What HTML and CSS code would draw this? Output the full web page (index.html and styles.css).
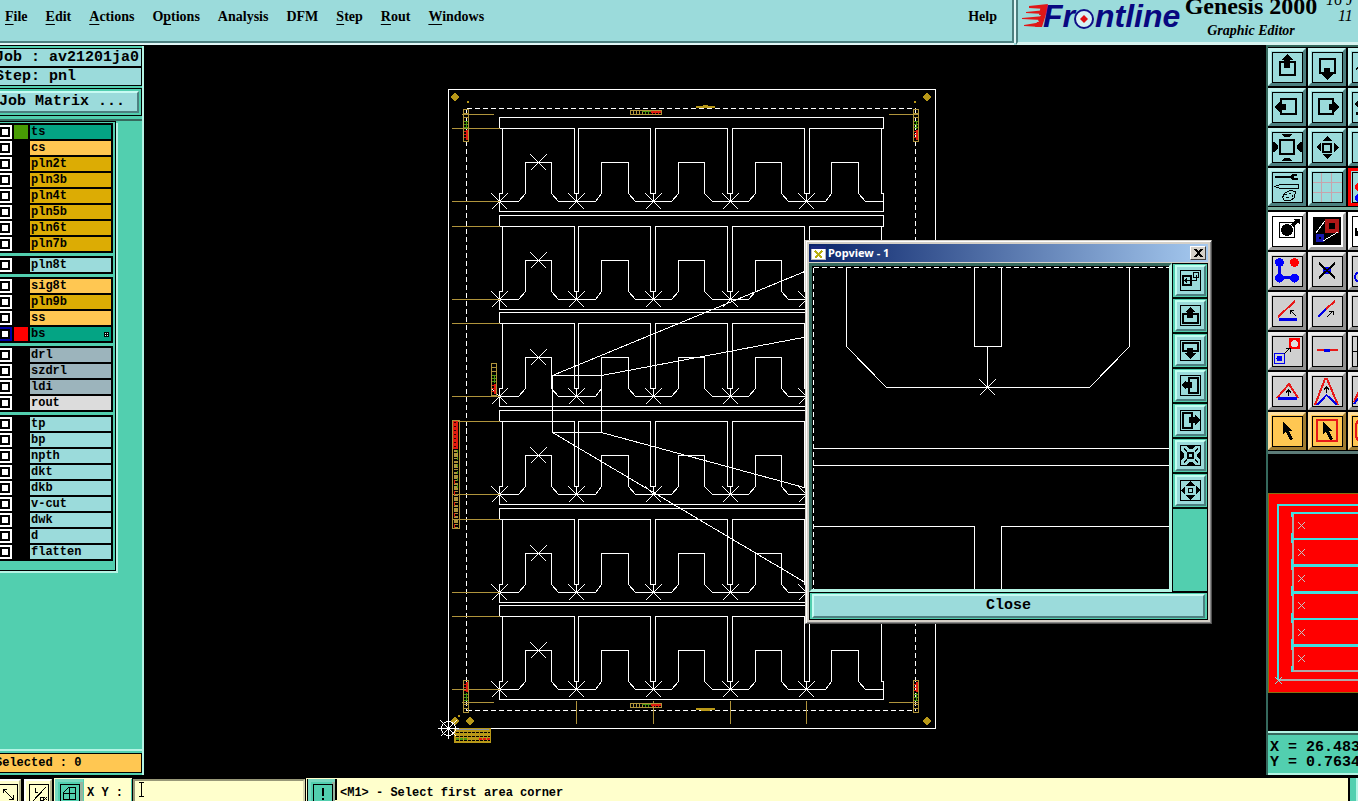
FILE: index.html
```html
<!DOCTYPE html>
<html lang="en">
<head>
<meta charset="utf-8">
<title>Genesis 2000 - Graphic Editor</title>
<link rel="stylesheet" href="styles.css">
</head>
<body>
<svg class="defs" aria-hidden="true">
  <defs>
    <g id="mark"><path d="M-8-8 8 8M-8 8 8-8"/></g>
    <g id="boardrow">
      <path d="M499.500 128.500V117.500H883.500V128.500"/>
      <path d="M499.500 128.500H574.500V193.500H578.500V128.500H650.500V193.500H655.500V128.500H727.500V193.500H732.500V128.500H804.500V193.500H809.500V128.500H883.500"/>
      <path d="M502.500 128.500V193.500H499.500V211.500H883.500V193.500H881.500V128.500"/>
      <path d="M576.500 193.500V201.500M653.500 193.500V201.500M730.500 193.500V201.500M806.500 193.500V201.500"/>
      <path d="M499.500 201.500H518.500L525.500 193.500V162.500H551.500V193.500L558.500 201.500H595.500L601.500 193.500V162.500H628.500V193.500L635.500 201.500H671.500L678.500 193.500V162.500H704.500V193.500L712.500 201.500H748.500L755.500 193.500V162.500H781.500V193.500L788.500 201.500H825.500L831.500 193.500V162.500H858.500V193.500L865.500 201.500H883.500"/>
      <use href="#mark" x="499.500" y="201.500"/><use href="#mark" x="576.500" y="201.500"/><use href="#mark" x="653.500" y="201.500"/><use href="#mark" x="730.500" y="201.500"/><use href="#mark" x="806.500" y="201.500"/><use href="#mark" x="538.500" y="162.500"/>
      <path class="gold" d="M452 128.500H500M452 201.500H500"/>
    </g>
    <g id="ladder">
      <rect x=".5" y=".5" width="5" height="32" class="gold"/>
      <path class="gold" d="M0 4.500H6M0 8.500H6"/>
      <path class="green" d="M1 12.500H5M1 15.500H5M1 18.500H5M3.500 12V20"/>
      <path class="red" d="M1 22.500H5M1 25.500H5M1 28.500H5M3.500 21V31M4.500 21V31"/>
    </g>
    <g id="hladder">
      <rect x=".5" y=".5" width="31" height="4" class="gold"/>
      <path class="gold" d="M3.500 0V5M6.500 0V5M9.500 0V5M12.500 0V5"/>
      <path class="green" d="M12 1.500H21M15.500 1V4M18.500 1V4"/>
      <path class="red" d="M21 2.500H31M21 1.500H31M22.500 1V4M25.500 1V4M28.500 1V4"/>
    </g>
    <path id="diamond" class="goldfill" d="M-1-4H1V-3H2V-2H3V-1H4V1H3V2H2V3H1V4H-1V3H-2V2H-3V1H-4V-1H-3V-2H-2V-3H-1Z"/>
    <g id="i-up"><path class="l2" d="M8 10H23V23H8Z"/><path class="f" d="M15 2 21 8H18V16H12V8H10Z"/></g>
    <g id="i-down"><path class="l2" d="M8 7H23V21H8Z"/><path class="f" d="M12 16H18V22H21L15 28 10 22H12Z"/></g>
    <g id="i-left"><path class="l2" d="M9 7H24V22H9Z"/><path class="f" d="M2 15 8 10V12H14V18H8V20Z"/></g>
    <g id="i-right"><path class="l2" d="M7 7H21V22H7Z"/><path class="f" d="M28 15 22 10V12H17V18H22V20Z"/></g>
    <g id="i-in"><path class="f" d="M10 2H20V3L17 5H13L10 3ZM10 29H20V28L17 26H13L10 28ZM1 10V20H2L6 17V13L2 10ZM30 10V20H29L25 17V13L29 10Z"/></g>
    <g id="i-out"><path class="f" d="M15 4 20 9H11ZM15 27 20 22H11ZM4 15 9 11V20ZM27 15 22 11V20Z"/></g>
    <path id="cursor" class="f" d="M11 6V18L14 16 18 24 21 23 17 15H21Z"/>
    <path id="tip" class="l1" d="M-3-3H1M-3-3V1M-3-3 3 3"/>
  </defs>
</svg>

<header class="top">
  <nav class="menubar">
    <button class="menu"><u>F</u>ile</button>
    <button class="menu"><u>E</u>dit</button>
    <button class="menu"><u>A</u>ctions</button>
    <button class="menu">O<u>p</u>tions</button>
    <button class="menu">Analysis</button>
    <button class="menu">DFM</button>
    <button class="menu"><u>S</u>tep</button>
    <button class="menu"><u>R</u>out</button>
    <button class="menu"><u>W</u>indows</button>
    <button class="menu help">Help</button>
  </nav>
  <div class="brand">
    <svg class="logo" width="164" height="40" viewBox="0 0 164 40" role="img" aria-label="Frontline">
      <path fill="#e01818" d="M7 6 26 4 24 9 7 8ZM4 12 24 10 22 14 4 13ZM0 18 22 16 20 20 0 19ZM2 25 20 22 19 27 2 26Z"/>
      <path fill="#e01818" d="M19 5H27L20 27H13L15 22H17L16 20 19 15H17Z"/>
      <text class="logotext" x="21" y="27">Fr</text>
      <circle cx="62" cy="19" r="9" fill="#d6f3f3" stroke="#101088" stroke-width="2"/>
      <path fill="#e01010" d="M62 15 66 19 62 23 58 19Z"/>
      <text class="logotext" x="73" y="27">ntline</text>
    </svg>
    <div class="product"><strong>Genesis 2000</strong><em>Graphic Editor</em></div>
    <div class="clock"><span>16 J</span><span>11</span></div>
  </div>
</header>

<main class="work">
  <aside class="side">
    <div class="info">Job : av21201ja0</div>
    <div class="info second">Step: pnl</div>
    <div class="matrixbox"><button class="matrix">Job Matrix ...</button></div>
    <div class="well">
      <div class="layers">
        <div class="group">
          <label class="layer"><input type="checkbox"><i class="swatch lime"></i><span class="jade">ts</span></label>
          <label class="layer"><input type="checkbox"><i class="swatch"></i><span class="amber">cs</span></label>
          <label class="layer"><input type="checkbox"><i class="swatch"></i><span class="ochre">pln2t</span></label>
          <label class="layer"><input type="checkbox"><i class="swatch"></i><span class="ochre">pln3b</span></label>
          <label class="layer"><input type="checkbox"><i class="swatch"></i><span class="ochre">pln4t</span></label>
          <label class="layer"><input type="checkbox"><i class="swatch"></i><span class="ochre">pln5b</span></label>
          <label class="layer"><input type="checkbox"><i class="swatch"></i><span class="ochre">pln6t</span></label>
          <label class="layer"><input type="checkbox"><i class="swatch"></i><span class="ochre">pln7b</span></label>
        </div>
        <div class="group">
          <label class="layer"><input type="checkbox"><i class="swatch"></i><span>pln8t</span></label>
        </div>
        <div class="group">
          <label class="layer"><input type="checkbox"><i class="swatch"></i><span class="amber">sig8t</span></label>
          <label class="layer"><input type="checkbox"><i class="swatch"></i><span class="ochre">pln9b</span></label>
          <label class="layer"><input type="checkbox"><i class="swatch"></i><span class="amber">ss</span></label>
          <label class="layer work-layer"><input type="checkbox"><i class="swatch scarlet"></i><span class="jade">bs<svg width="5" height="5" viewBox="0 0 5 5"><path d="M0 0H5V5H0Z"/><path fill="#dff" d="M1 1H2V2H1ZM3 1H4V2H3ZM1 3H2V4H1ZM3 3H4V4H3Z"/></svg></span></label>
        </div>
        <div class="group">
          <label class="layer"><input type="checkbox"><i class="swatch"></i><span class="slate">drl</span></label>
          <label class="layer"><input type="checkbox"><i class="swatch"></i><span class="slate">szdrl</span></label>
          <label class="layer"><input type="checkbox"><i class="swatch"></i><span class="slate">ldi</span></label>
          <label class="layer"><input type="checkbox"><i class="swatch"></i><span class="pale">rout</span></label>
        </div>
        <div class="group">
          <label class="layer"><input type="checkbox"><i class="swatch"></i><span>tp</span></label>
          <label class="layer"><input type="checkbox"><i class="swatch"></i><span>bp</span></label>
          <label class="layer"><input type="checkbox"><i class="swatch"></i><span>npth</span></label>
          <label class="layer"><input type="checkbox"><i class="swatch"></i><span>dkt</span></label>
          <label class="layer"><input type="checkbox"><i class="swatch"></i><span>dkb</span></label>
          <label class="layer"><input type="checkbox"><i class="swatch"></i><span>v-cut</span></label>
          <label class="layer"><input type="checkbox"><i class="swatch"></i><span>dwk</span></label>
          <label class="layer"><input type="checkbox"><i class="swatch"></i><span>d</span></label>
          <label class="layer"><input type="checkbox"><i class="swatch"></i><span>flatten</span></label>
        </div>
      </div>
    </div>
    <div class="selected">Selected : 0</div>
  </aside>

  <section class="canvas">
    <svg class="drawing" viewBox="144 45 1122 732" preserveAspectRatio="xMinYMin meet" role="img" aria-label="Panel layout">
      <path d="M448.500 89.500H935.500V728.500H448.500Z"/>
      <path class="dash" d="M466.500 108.500H915.500M466.500 108.500V710.500M915.500 108.500V710.500M466.500 710.500H915.500"/>
      <use href="#boardrow"/>
      <use href="#boardrow" y="98"/>
      <use href="#boardrow" y="195"/>
      <use href="#boardrow" y="293"/>
      <use href="#boardrow" y="391"/>
      <use href="#boardrow" y="488"/>
      <path class="gold" d="M462 114.500H494M889 114.500H919M462 702.500H494M889 702.500H919M576.500 701V724M653.500 701V724M730.500 701V724M806.500 701V724"/>
      <use href="#ladder" x="463" y="109"/>
      <use href="#ladder" x="913" y="109"/>
      <use href="#ladder" transform="translate(463 713) scale(1 -1)"/>
      <use href="#ladder" transform="translate(913 713) scale(1 -1)"/>
      <use href="#hladder" x="630" y="110"/>
      <use href="#hladder" x="630" y="703"/>
      <path class="goldfill" d="M696 106H703V105H708V106H715V108H696ZM696 708H715V710H710V711H701V710H696Z"/>
      <path class="goldfill" d="M467 101H469V103H467ZM914 101H916V103H914ZM458 715H460V717H458Z"/>
      <use href="#diamond" x="455" y="97"/><use href="#diamond" x="927" y="97"/><use href="#diamond" x="455" y="721"/><use href="#diamond" x="470" y="721"/><use href="#diamond" x="927" y="721"/>
      <use href="#ladder" x="491" y="363"/>
      <path class="red" stroke-width="5" d="M455.500 421V449"/>
      <path stroke="#300" stroke-dasharray="1 3" stroke-width="2" d="M455 422V449"/>
      <path class="gold" d="M452.500 449V528.500H459.500V420.500H452.500V449"/>
      <path class="gold" stroke-width="4" stroke-dasharray="2 1 4 1 1 2" d="M456 450V528"/>
      <path class="green" stroke-dasharray="3 4" d="M457.500 450V490"/>
      <path class="red" stroke-dasharray="4 7" d="M454.500 480V528"/>
      <path class="goldfill" d="M454 728H491V743H454Z"/>
      <path class="slateline" d="M457 729.500H489"/>
      <path stroke="#000" stroke-dasharray="3 1" d="M456 732.500H490M456 736.500H490M456 740.500H490"/>
      <path class="green" stroke-width="2" stroke-dasharray="3 1" d="M456 739H467"/>
      <path class="red" stroke-width="2" stroke-dasharray="3 1" d="M479 739H490"/>
      <circle cx="448.500" cy="728.500" r="7"/>
      <path d="M438 728.500H459M448.500 718V739M440.500 720.500 456.500 736.500M440.500 736.500 456.500 720.500"/>
      <path d="M552.500 375.500H601.500V432.500H552.500Z"/>
      <path d="M552.500 375.500 806 271M601.500 375.500 806 337M601.500 432.500 806 488M552.500 432.500 806 583"/>
    </svg>

    <section class="popview" aria-label="Popview - 1">
      <div class="titlebar">
        <svg width="15" height="14" viewBox="0 0 15 14"><path fill="#fff" d="M0 1H15V14H0Z"/><path fill="#1a2a80" d="M0 0H15V3H0Z"/><path fill="#b8b8b8" d="M0 3H1V14H0ZM14 3H15V14H14ZM0 13H15V14H0Z"/><path stroke="#b8b010" stroke-width="2" d="M4 5 11 12M11 5 4 12"/></svg>
        <span>Popview - 1</span>
        <button class="close" aria-label="Close window"><svg width="9" height="8" viewBox="0 0 9 8"><path stroke="#000" stroke-width="2" d="M1 0 8 8M8 0 1 8"/></svg></button>
      </div>
      <div class="popbody">
        <svg class="popdrawing" viewBox="812 266 357 323" preserveAspectRatio="xMinYMin slice" role="img" aria-label="Magnified detail">
          <path class="dash" d="M813.500 267.500H1169M813.500 267.500V589"/>
          <path d="M846.500 267V346.500L886.500 387.500H1089.500L1129.500 346.500V267M974.500 267V346.500H1001.500V267M987.500 346.500V387.500"/>
          <use href="#mark" x="987.500" y="387.500"/>
          <path d="M813 448.500H1169M813 465.500H1169M813 526.500H974.500V589M1169 526.500H1001.500V589"/>
        </svg>
        <div class="poptools">
          <button aria-label="Link"><svg viewBox="2 2 27 27"><path class="frame" d="M5.500 5.500H25.500V25.500H5.500Z"/><path class="l2" d="M8 11H16V20H8Z"/><path class="l1" d="M18.500 7.500H23.500V12.500H18.500ZM21.500 10V15.500H10M12 13.500 10 15.500 12 17.500"/></svg></button>
          <button aria-label="Pan up"><svg viewBox="2 2 27 27"><path class="frame" d="M5.500 5.500H25.500V25.500H5.500Z"/><path class="l2" d="M8 14H23V23H8Z"/><path class="f" d="M15 7 21 12H18V18H12V12H10Z"/></svg></button>
          <button aria-label="Pan down"><svg viewBox="2 2 27 27"><path class="frame" d="M5.500 5.500H25.500V25.500H5.500Z"/><path class="l2" d="M8 8H23V16H8Z"/><path class="f" d="M12 13H18V18H21L15 24 10 18H12Z"/></svg></button>
          <button aria-label="Pan left"><svg viewBox="2 2 27 27"><path class="frame" d="M5.500 5.500H25.500V25.500H5.500Z"/><path class="l2" d="M14 8H23V23H14Z"/><path class="f" d="M6 15 11 10V12H17V18H11V20Z"/></svg></button>
          <button aria-label="Pan right"><svg viewBox="2 2 27 27"><path class="frame" d="M5.500 5.500H25.500V25.500H5.500Z"/><path class="l2" d="M8 8H17V23H8Z"/><path class="f" d="M25 15 20 10V12H14V18H20V20Z"/></svg></button>
          <button aria-label="Zoom out"><svg viewBox="2 2 27 27"><path class="frame" d="M5.500 5.500H25.500V25.500H5.500Z"/><path class="l2" d="M13 13H18V18H13Z"/><path class="f" d="M11 6H20L17 9H14ZM11 25H20L17 22H14ZM6 11V20L9 17V14ZM25 11V20L22 17V14ZM9 8 12 11 11 12 8 9ZM22 8 19 11 20 12 23 9ZM9 23 12 20 11 19 8 22ZM22 23 19 20 20 19 23 22Z"/></svg></button>
          <button aria-label="Zoom in"><svg viewBox="2 2 27 27"><path class="frame" d="M5.500 5.500H25.500V25.500H5.500Z"/><path class="l1" d="M13.500 13.500H17.500V17.500H13.500Z"/><path class="f" d="M15 6 20 11H11ZM15 25 20 20H11ZM6 15 10 11V20ZM25 15 21 11V20Z"/></svg></button>
        </div>
      </div>
      <div class="closebox"><button>Close</button></div>
    </section>
  </section>

  <aside class="tools">
    <div class="toolgrid">
      <button aria-label="Pan up"><svg viewBox="0 0 31 31"><path class="frame" d="M.5.5H30.500V30.500H.5Z"/><use href="#i-up"/></svg></button>
      <button aria-label="Pan down"><svg viewBox="0 0 31 31"><path class="frame" d="M.5.5H30.500V30.500H.5Z"/><use href="#i-down"/></svg></button>
      <button aria-label="Redraw"><svg viewBox="0 0 31 31"><path class="frame" d="M.5.5H30.500V30.500H.5Z"/><path class="l1" d="M4 18 7 14H12"/></svg></button>
      <button aria-label="Pan left"><svg viewBox="0 0 31 31"><path class="frame" d="M.5.5H30.500V30.500H.5Z"/><use href="#i-left"/></svg></button>
      <button aria-label="Pan right"><svg viewBox="0 0 31 31"><path class="frame" d="M.5.5H30.500V30.500H.5Z"/><use href="#i-right"/></svg></button>
      <button aria-label="Previous view"><svg viewBox="0 0 31 31"><path class="frame" d="M.5.5H30.500V30.500H.5Z"/><path class="f" d="M2 12 6 8V16ZM4 20H9V23H4Z"/></svg></button>
      <button aria-label="Zoom out"><svg viewBox="0 0 31 31"><path class="frame" d="M.5.5H30.500V30.500H.5Z"/><path class="l2" d="M8 8H22V22H8Z"/><use href="#i-in"/></svg></button>
      <button aria-label="Zoom in"><svg viewBox="0 0 31 31"><path class="frame" d="M.5.5H30.500V30.500H.5Z"/><path class="l2" d="M11 12H19V20H11Z"/><use href="#i-out"/></svg></button>
      <button aria-label="Home"><svg viewBox="0 0 31 31"><path class="frame" d="M.5.5H30.500V30.500H.5Z"/></svg></button>
      <button aria-label="Settings"><svg viewBox="0 0 31 31"><path class="frame" d="M.5.5H30.500V30.500H.5Z"/><path class="f" d="M3 4H18L21 2H25V4H22V6H26V8H20L18 6H3Z"/><path class="l1" d="M3 14.500 8 12.500H26.500V16.500H8ZM10.500 25.500 12.500 21.500 17.500 18.500 23.500 19.500 22.500 25.500 18.500 28.500H12.500ZM13 22.500H15M17 21.500H19M14 25.500H17M20 23V25"/></svg></button>
      <button aria-label="Grid"><svg viewBox="0 0 31 31"><path class="frame" d="M.5.5H30.500V30.500H.5Z"/><path class="pink" d="M9.500 1V30M19.500 1V30M1 10.500H30M1 20.500H30"/></svg></button>
      <button class="active" aria-label="Snap"><svg viewBox="0 0 31 31"><path class="frame" d="M.5.5H30.500V30.500H.5Z"/><path class="r2" d="M7 1V14"/><circle class="rf" cx="7" cy="15" r="4"/><circle class="bf" cx="7" cy="26" r="4"/></svg></button>
    </div>
    <div class="toolgrid edit">
      <button class="white" aria-label="Add feature"><svg viewBox="0 0 31 31"><path class="frame" d="M.5.5H30.500V30.500H.5Z"/><path class="l1" d="M7.500 6.500H22.500V21.500H7.500Z"/><circle class="f" cx="15" cy="14" r="6"/><path class="f" d="M19 8 23 5 21 3H28V9L26 7 21 11Z"/></svg></button>
      <button class="white" aria-label="Popview"><svg viewBox="0 0 31 31"><path class="f" d="M1 1H29V29H1Z"/><path stroke="#b01818" stroke-width="4" d="M15 5H25V15H15Z"/><path stroke="#1818b0" stroke-width="3" d="M5 19H10V24H5Z"/><path stroke="#fff" d="M4 17 13 5M11 25 26 16"/></svg></button>
      <button class="white" aria-label="Text"><svg viewBox="0 0 31 31"><path class="frame" d="M.5.5H30.500V30.500H.5Z"/><path class="f" d="M3 12H5V15H6V12H8V15H9V12H11V20H3Z"/></svg></button>
      <button aria-label="Copy corners"><svg viewBox="0 0 31 31"><path class="frame" d="M.5.5H30.500V30.500H.5Z"/><path class="b3" d="M7.500 6V21.500H23"/><circle class="bf" cx="7.500" cy="6.500" r="4.500"/><circle class="bf" cx="7.500" cy="22" r="4.500"/><circle class="bf" cx="22.500" cy="22" r="4.500"/><circle class="rf" cx="22.500" cy="6.500" r="4.500"/></svg></button>
      <button aria-label="Delete"><svg viewBox="0 0 31 31"><path class="frame" d="M.5.5H30.500V30.500H.5Z"/><circle class="bf" cx="15" cy="14.500" r="4"/><path class="l2" d="M7 7 23 22M23 7 7 22"/></svg></button>
      <button aria-label="Circle"><svg viewBox="0 0 31 31"><path class="frame" d="M.5.5H30.500V30.500H.5Z"/><circle class="b2" cx="8" cy="21" r="5"/></svg></button>
      <button aria-label="Rotate line"><svg viewBox="0 0 31 31"><path class="frame" d="M.5.5H30.500V30.500H.5Z"/><path class="r2" d="M6 21 23 5"/><path class="b3" d="M7 23.500H25"/><use href="#tip" x="21" y="17"/></svg></button>
      <button aria-label="Extend line"><svg viewBox="0 0 31 31"><path class="frame" d="M.5.5H30.500V30.500H.5Z"/><path class="b2" d="M6 21 14 13"/><path class="r2" d="M14 13 23 5"/><use href="#tip" transform="translate(18 18) scale(-1 1)"/></svg></button>
      <button aria-label="Line"><svg viewBox="0 0 31 31"><path class="frame" d="M.5.5H30.500V30.500H.5Z"/></svg></button>
      <button aria-label="Move"><svg viewBox="0 0 31 31"><path class="frame" d="M.5.5H30.500V30.500H.5Z"/><path class="rf" d="M17 2H28V13H17Z"/><circle fill="#ddd" cx="22.500" cy="7.500" r="3.500"/><path stroke="#00e" d="M2.500 17.500H12.500V27.500H2.500Z"/><circle class="bf" cx="7.500" cy="22.500" r="3"/><use href="#tip" transform="translate(15 15) scale(-1 1)"/></svg></button>
      <button aria-label="Trim"><svg viewBox="0 0 31 31"><path class="frame" d="M.5.5H30.500V30.500H.5Z"/><path class="r2" d="M5 14H26"/><path class="b3" d="M12 14H18"/></svg></button>
      <button aria-label="Split"><svg viewBox="0 0 31 31"><path class="frame" d="M.5.5H30.500V30.500H.5Z"/><path class="l1" d="M5.500 1V30M1 15.500H12"/></svg></button>
      <button aria-label="Triangle"><svg viewBox="0 0 31 31"><path class="frame" d="M.5.5H30.500V30.500H.5Z"/><path class="r2" d="M5 22 17 8 26 22"/><path class="b3" d="M6 22.500H25"/><path class="l1" d="M16.500 20V14M14 16.500 16.500 14 19 16.500"/></svg></button>
      <button aria-label="Stretch"><svg viewBox="0 0 31 31"><path class="frame" d="M.5.5H30.500V30.500H.5Z"/><path class="r2" d="M3 29 13 3H15L26 29"/><path class="b2" d="M5 29 14.500 19 25 29"/><path class="l1" d="M14.500 17V11M12 13.500 14.500 11 17 13.500"/></svg></button>
      <button aria-label="Arc"><svg viewBox="0 0 31 31"><path class="frame" d="M.5.5H30.500V30.500H.5Z"/><path class="r2" d="M2 26 12 4"/><path class="b2" d="M2 28 12 15"/></svg></button>
      <button class="pick" aria-label="Select"><svg viewBox="0 0 31 31"><path class="frame" d="M.5.5H30.500V30.500H.5Z"/><use href="#cursor"/></svg></button>
      <button class="pick" aria-label="Select area"><svg viewBox="0 0 31 31"><path class="frame" d="M.5.5H30.500V30.500H.5Z"/><path class="r2" d="M5 4H25V25H5Z"/><use href="#cursor"/></svg></button>
      <button class="pick" aria-label="Select shape"><svg viewBox="0 0 31 31"><path class="frame" d="M.5.5H30.500V30.500H.5Z"/><path class="r2" d="M14 5H6L4 8V21L6 24H14"/></svg></button>
    </div>
    <div class="overview">
      <svg width="120" height="200" viewBox="0 0 120 200" role="img" aria-label="Overview">
        <path fill="#f00" stroke="#887010" d="M.5.5H120V199.500H.5Z"/>
        <path stroke="#40e0e0" stroke-width="2" d="M120 12H10V187"/>
        <path stroke="#b0a8a8" stroke-width="2" d="M10 187H120M25 20V178H120"/>
        <path stroke="#40e0e0" stroke-width="2" d="M120 20H24M24 46H120M24 72H120M24 73H120M24 99H120M24 100H120M24 126H120M24 152H120M24 153H120M24 19V24M24 40V50M24 66V77M24 93V103M24 120V130M24 146V157M24 173V179"/>
        <g stroke="#c0c8c8"><path d="M30 29 37 36M37 29 30 36M30 56 37 63M37 56 30 63M30 82 37 89M37 82 30 89M30 109 37 116M37 109 30 116M30 136 37 143M37 136 30 143M30 162 37 169M37 162 30 169"/></g>
        <path stroke="#80e0e0" d="M7 184 14 191M14 184 7 191"/>
      </svg>
    </div>
    <div class="coords"><span>X = 26.483</span><span>Y = 0.7634</span></div>
  </aside>
</main>

<footer class="status">
  <button class="cream" aria-label="Snap mode"><svg viewBox="0 0 20 20"><path class="frame" d="M.5.5H19.500V19.500H.5Z"/><path class="l1" d="M5 5 15 15M5 9V5H9M15 11V15H11"/></svg></button>
  <button class="cream" aria-label="Coordinates mode"><svg viewBox="0 0 20 20"><path class="frame" d="M.5.5H19.500V19.500H.5Z"/><path class="l1" d="M3 18 17 3M6.500 4V8H9M11 13H14V16H11ZM15 13 18 16M18 13 15 16"/></svg></button>
  <button class="teal" aria-label="Grid units"><svg viewBox="0 0 20 20"><path class="frame" d="M.5.5H19.500V19.500H.5Z"/><path class="l1" d="M3.500 8.500 8.500 3.500H15.500V15.500H3.500ZM9.500 3V16M3 9.500H16"/></svg></button>
  <label class="xy" for="xy">X Y :</label>
  <input id="xy" type="text">
  <svg class="ibeam" width="7" height="16" viewBox="0 0 7 16"><path class="l1" d="M1 .5H6M3.500 0V15M1 14.500H6"/></svg>
  <button class="teal alert" aria-label="Alert"><svg viewBox="0 0 20 20"><path class="frame" d="M.5.5H19.500V19.500H.5Z"/><path class="l2" d="M10 4V12M10 14V16"/></svg></button>
  <output class="message">&lt;M1&gt; - Select first area corner</output>
  <span class="grip"></span>
</footer>
</body>
</html>
```

FILE: styles.css
```css
:root {
  --cyan: #9bdbdb;
  --teal: #52cfaf;
  --light: #b4f4e4;
  --dark: #4c8080;
  --deep: #35695d;
  --cream: #ffffcc;
  --amber: #ffc752;
  --mono: "Liberation Mono", "DejaVu Sans Mono", monospace;
  --serif: "Liberation Serif", "Times New Roman", serif;
}

* { box-sizing: border-box; }

html, body { height: 100%; }

body {
  margin: 0;
  display: flex;
  flex-direction: column;
  overflow: hidden;
  background: #000;
  color: #000;
  font: bold 12px/14px var(--mono);
}

button {
  margin: 0;
  padding: 0;
  border: 0;
  border-radius: 0;
  color: inherit;
  font: inherit;
}

svg { display: block; shape-rendering: crispEdges; fill: none; }
.defs { position: absolute; width: 0; height: 0; }

.frame, .l1 { stroke: #000; stroke-width: 1; fill: none; }
.l2 { stroke: #000; stroke-width: 2; fill: none; }
.f { fill: #000; }
.r2 { stroke: #e81818; stroke-width: 2; fill: none; }
.b2 { stroke: #0000e8; stroke-width: 2; fill: none; }
.b3 { stroke: #0000e8; stroke-width: 3; fill: none; }
.rf { fill: #f00; }
.bf { fill: #00f; }
.pink { stroke: #c8a4ac; }

/* header */
.top { display: flex; flex: none; height: 45px; overflow: hidden; background: var(--cyan); }

.menubar {
  display: flex;
  flex: 1;
  align-items: flex-start;
  gap: 18px;
  padding: 8px 15px 0 5px;
  border-right: 2px solid var(--dark);
  border-bottom: 2px solid var(--dark);
  box-shadow: 0 2px #dff6f6, 2px 0 #dff6f6;
  margin-bottom: 2px;
}

.menu { background: none; font: bold 14px/18px var(--serif); }
.menu u { text-underline-offset: 3px; text-decoration-thickness: 1px; text-decoration-skip-ink: none; }
.menu.help { margin-left: auto; }

.brand {
  display: flex;
  flex: none;
  width: 342px;
  margin-left: 2px;
  padding-left: 4px;
  border-left: 2px solid var(--dark);
  border-bottom: 3px solid #d8f4f0;
  white-space: nowrap;
}
.logo { flex: none; shape-rendering: auto; }
.logotext { fill: #080880; font: italic bold 32px "Liberation Sans", Arial, sans-serif; }
.product { display: flex; flex: none; flex-direction: column; align-items: center; margin: -7px 0 0 -2px; width: 134px; }
.product strong { font: bold 24px/26px var(--serif); }
.product em { font: italic bold 14px/24px var(--serif); }
.clock { flex: none; margin: -8px 0 0 8px; font: italic 16px/16px var(--serif); }
.clock span { display: block; }
.clock span + span { padding-left: 12px; }

/* work area */
.work { display: flex; flex: 1; min-height: 0; }

.side {
  display: flex;
  flex: none;
  flex-direction: column;
  width: 150px;
  margin: 1px 0 2px -6px;
  padding-top: 2px;
  background: var(--teal);
  border-right: 2px solid var(--light);
}
.info {
  height: 19px;
  border: 1px solid #000;
  background: var(--cyan);
  font: bold 15px/17px var(--mono);
  white-space: pre;
}
.matrixbox { margin-top: 2px; padding: 2px; border: 1px solid #000; }
.matrix {
  display: block;
  width: 100%;
  height: 22px;
  border: 2px solid;
  border-color: #c8fbf3 var(--dark) var(--dark) #c8fbf3;
  background: var(--cyan);
  font: bold 15px/18px var(--mono);
  text-align: left;
}
.well {
  flex: 1;
  margin-top: 3px;
  border-top: 2px solid var(--deep);
  border-bottom: 2px solid var(--light);
}
.layers {
  display: flex;
  flex-direction: column;
  gap: 3px;
  width: 122px;
  padding: 1px 2px 9px 4px;
  border: solid #000;
  border-width: 1px 1px 1px 0;
  box-shadow: 2px 2px var(--light);
}
.group { padding: 2px 2px 0 0; background: #000; }
.layer {
  display: grid;
  grid-template-columns: 14px 14px 1fr;
  column-gap: 2px;
  height: 14px;
  margin-bottom: 2px;
}
.layer input {
  appearance: none;
  width: 14px;
  height: 14px;
  margin: 0;
  border: 2px solid #fff;
  background: #fff;
  box-shadow: inset 0 0 0 2px #000;
}
.work-layer input { border-color: #0000a8; }
.swatch { background: #000; }
.lime { background: #489c04; }
.scarlet { background: #f00; }
.layer span {
  display: flex;
  align-items: center;
  justify-content: space-between;
  padding: 0 2px 0 1px;
  background: var(--cyan);
  line-height: 14px;
}
.layer .jade { background: #04a484; }
.layer .amber { background: var(--amber); }
.layer .ochre { background: #dcac04; }
.layer .slate { background: #9cb4bc; }
.layer .pale { background: #dcdcdc; }
.layer svg { fill: #000; }
.selected {
  height: 20px;
  margin: 2px 0;
  border: 1px solid #000;
  background: var(--amber);
  line-height: 18px;
  white-space: pre;
}

/* drawing area */
.canvas { position: relative; flex: 1; min-width: 0; overflow: hidden; }
.drawing { width: 100%; stroke: #fff; }
.dash { stroke-dasharray: 5 3; }
.gold { stroke: #b0943c; }
.green { stroke: #4c9810; }
.red { stroke: #e01c10; }
.slateline { stroke: #8890a0; }
.goldfill { fill: #b89818; stroke: none; }

.popview {
  position: absolute;
  left: 661px;
  top: 195px;
  width: 407px;
  padding: 3px;
  border: 1px solid;
  border-color: #d4d0c8 #505050 #505050 #d4d0c8;
  background: #d4d0c8;
  box-shadow: inset 1px 1px #fff, inset -1px -1px #888;
}
.titlebar {
  display: flex;
  align-items: center;
  gap: 2px;
  height: 18px;
  padding: 0 2px;
  background: linear-gradient(90deg, #0a246a, #a6caf0);
  color: #fff;
  font: bold 11px/18px "Noto Sans", "DejaVu Sans", sans-serif;
}
.titlebar span { flex: 1; }
.close {
  display: grid;
  place-items: center;
  width: 16px;
  height: 14px;
  border: 1px solid;
  border-color: #fff #404040 #404040 #fff;
  background: #d4d0c8;
}
.popbody { display: flex; margin-top: 1px; background: var(--teal); }
.popdrawing {
  flex: 1;
  min-width: 0;
  height: 329px;
  border: 3px solid;
  border-color: var(--deep) var(--light) var(--light) var(--deep);
  background: #000;
  stroke: #fff;
}
.poptools { display: flex; flex: none; flex-direction: column; width: 36px; border: 1px solid #000; }
.poptools button {
  height: 35px;
  padding: 1px 1px 1px 2px;
  border-bottom: 2px solid #001008;
  background: var(--teal);
}
.poptools svg {
  width: 31px;
  height: 31px;
  background: var(--cyan);
  border: 2px solid;
  border-color: #c0fff0 var(--dark) var(--dark) #c0fff0;
}
.closebox { padding: 1px 2px; border: 1px solid #000; background: var(--teal); }
.closebox button {
  display: block;
  width: 100%;
  height: 24px;
  border: 2px solid;
  border-color: #c8fbf3 var(--dark) var(--dark) #c8fbf3;
  background: var(--cyan);
  font: bold 15px/20px var(--mono);
}

/* tool column */
.tools {
  display: flex;
  flex: none;
  flex-direction: column;
  width: 92px;
  margin-bottom: 2px;
  overflow: hidden;
  border-left: 2px solid var(--deep);
}
.toolgrid {
  display: grid;
  flex: none;
  grid-template-columns: repeat(3, 38px);
  gap: 2px;
  padding: 1px 0 1px;
  border-top: 2px solid var(--deep);
}
.toolgrid.edit {
  padding-top: 2px;
  border-top: 3px solid #7ab0a0;
  border-bottom: 3px solid #5c7c78;
}
.toolgrid button {
  height: 38px;
  padding: 1px 0 0 1px;
  border: 3px solid;
  border-color: #c4f4f0 var(--dark) var(--dark) #c4f4f0;
  background: var(--cyan);
}
.toolgrid svg { width: 31px; height: 31px; }
.toolgrid.edit button { border-color: #ececec #909090 #909090 #ececec; background: #d0d0d0; }
.toolgrid.edit .white { border-color: #fff #a0a0a0 #a0a0a0 #fff; background: #fff; }
.toolgrid.edit .pick { border-color: #ffe0a0 #a07c30 #a07c30 #ffe0a0; background: var(--amber); }
.toolgrid .active { border-color: #f00; }
.overview { display: flex; flex: 1; align-items: center; min-height: 0; padding-top: 1px; }
.overview svg { flex: none; }
.coords {
  flex: none;
  height: 44px;
  padding: 7px 0 0 2px;
  border-top: 2px solid var(--light);
  border-bottom: 2px solid var(--light);
  box-shadow: inset 0 2px var(--deep);
  background: var(--teal);
  font: bold 15px/15px var(--mono);
  white-space: pre;
}
.coords span { display: block; }

/* status line */
.status {
  display: flex;
  flex: none;
  align-items: flex-start;
  height: 24px;
  padding-top: 1px;
  overflow: hidden;
  background: var(--cream);
  border-top: 1px solid #000;
}
.status > button { flex: none; width: 28px; height: 30px; margin-right: 3px; padding: 3px; }
.status > button svg { width: 20px; height: 20px; }
.cream { background: var(--cream); border: 2px solid; border-color: #fff #b8b890 #b8b890 #fff; outline: 2px solid #000; }
.cream:first-child { margin-left: -7px; }
.teal { background: var(--teal); box-shadow: inset 3px 3px #78d8c0, inset -3px 0 #98b4a0; }
.status > .teal { padding-left: 5px; margin-right: 0; }
.xy { flex: none; width: 50px; height: 30px; padding: 7px 0 0 3px; border-right: 2px solid var(--teal); border-left: 1px solid var(--teal); }
.status input {
  flex: none;
  width: 172px;
  height: 30px;
  border: 2px solid;
  border-color: #989878 #d8d8b0 #d8d8b0 #989878;
  outline: 1px solid #000;
  background: var(--cream);
}
.ibeam { flex: none; margin: 3px 0 0 -167px; }
.status > .alert { margin-left: 162px; border-left: 1px solid #000; }
.message { flex: 1; padding: 7px 0 0 3px; border-left: 2px solid #000; white-space: pre; }
.grip { flex: none; width: 10px; height: 30px; margin-top: -1px; border-left: 2px solid #000; background: var(--light); box-shadow: inset 6px 0 var(--teal); }
```
